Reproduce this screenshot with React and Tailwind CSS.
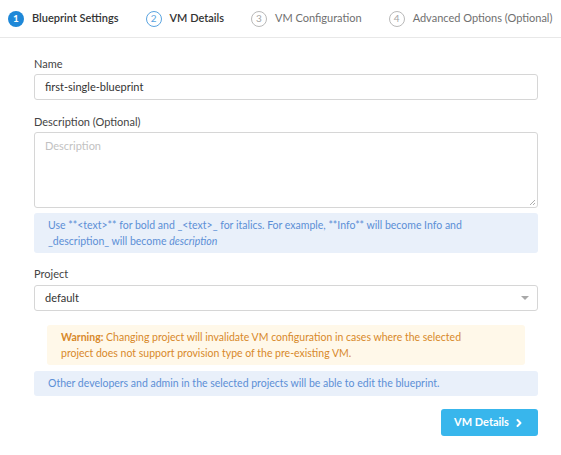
import { ChevronRight } from "lucide-react";

const steps = [
  { n: 1, label: "Blueprint Settings", state: "done" },
  { n: 2, label: "VM Details", state: "next" },
  { n: 3, label: "VM Configuration", state: "todo" },
  { n: 4, label: "Advanced Options (Optional)", state: "todo" },
];

function StepCircle({ n, state }) {
  if (state === "done") {
    return (
      <span className="flex h-4 w-4 shrink-0 items-center justify-center rounded-full bg-[#1e88d8] text-[10px] font-bold text-white">
        {n}
      </span>
    );
  }
  return (
    <span
      className={`flex h-4 w-4 shrink-0 items-center justify-center rounded-full border text-[10px] ${
        state === "next" ? "border-[#5aa4e0] text-[#5aa4e0]" : "border-[#b9b9b9] text-[#a5a5a5]"
      }`}
    >
      {n}
    </span>
  );
}

export default function App() {
  return (
    <div className="min-h-[455px] w-[561px] bg-white font-['Lato',sans-serif] text-[#444]">
      <div className="flex h-[38px] items-center gap-[27px] whitespace-nowrap border-b border-[#e8e8e8] pl-2">
        {steps.map((s) => (
          <div key={s.n} className="flex items-center gap-2">
            <StepCircle n={s.n} state={s.state} />
            <span
              className={`text-[11px] ${
                s.state === "todo" ? "text-[#707070]" : "font-semibold text-[#333]"
              }`}
            >
              {s.label}
            </span>
          </div>
        ))}
      </div>

      <div className="pl-[34px] pr-[23px] pt-[19px]">
        <label className="block text-[11px] leading-[14px] text-[#444]">Name</label>
        <div className="mt-[3px] flex h-[26px] items-center rounded-[3px] border border-[#d6d6d6] px-[10px] text-[11px] text-[#333]">
          first-single-blueprint
        </div>

        <label className="mt-[15px] block text-[11px] leading-[14px] text-[#444]">Description (Optional)</label>
        <div className="relative mt-[3px] h-[76px] rounded-[3px] border border-[#d6d6d6] px-[10px] pt-[5px] text-[11px] text-[#c2c2c2]">
          Description
          <svg className="absolute bottom-[1px] right-[1px]" width="7" height="7" viewBox="0 0 7 7">
            <path d="M6 1 L1 6 M6 4 L4 6" stroke="#999" strokeWidth="0.8" />
          </svg>
        </div>

        <div className="mt-[5px] rounded-[3px] bg-[#e9f0fa] px-[14px] py-[4px] text-[10.5px] leading-[16px] text-[#5c8fd6]">
          Use **&lt;text&gt;** for bold and _&lt;text&gt;_ for italics. For example, **Info** will become Info and
          <br />
          _description_ will become <i>description</i>
        </div>

        <label className="mt-[14px] block text-[11px] leading-[14px] text-[#444]">Project</label>
        <div className="mt-[4px] flex h-[26px] items-center justify-between rounded-[3px] border border-[#d6d6d6] pl-[10px] pr-[8px] text-[11px] text-[#333]">
          <span>default</span>
          <svg width="8" height="4" viewBox="0 0 8 4">
            <path d="M0 0 H8 L4 4 Z" fill="#a8a8a8" />
          </svg>
        </div>

        <div className="mx-[13px] mt-[14px] rounded-[3px] bg-[#fff8e9] px-[14px] py-[4px] text-[10.5px] leading-[16px] text-[#d8892a]">
          <b>Warning:</b> Changing project will invalidate VM configuration in cases where the selected
          <br />
          project does not support provision type of the pre-existing VM.
        </div>

        <div className="mt-[6px] flex h-[25px] items-center rounded-[3px] bg-[#e9f0fa] px-[14px] text-[10.5px] text-[#5c8fd6]">
          Other developers and admin in the selected projects will be able to edit the blueprint.
        </div>

        <div className="mt-[13px] flex justify-end">
          <button className="flex h-[27px] w-[97px] items-center justify-center gap-[4px] rounded-[3px] bg-[#38b6ec] text-[11px] font-bold text-white">
            VM Details
            <ChevronRight size={12} strokeWidth={4} />
          </button>
        </div>
      </div>
    </div>
  );
}
